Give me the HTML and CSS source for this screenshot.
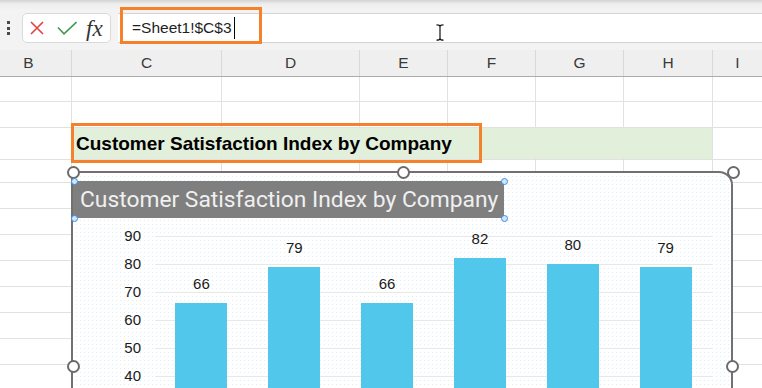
FILE: index.html
```html
<!DOCTYPE html>
<html>
<head>
    <meta charset="utf-8">
    <title>Chart title linked to cell</title>
    <link rel="stylesheet" href="styles.css">
</head>
<body>
    <div class="app">
        <!-- formula bar -->
        <div class="formula-bar">
            <div class="grip"><span></span><span></span><span></span></div>
            <div class="fx-group">
                <svg class="ic-cancel" width="14" height="14" viewBox="0 0 14 14"><path d="M1 1L13 13M13 1L1 13" stroke="#e5413f" stroke-width="1.6" fill="none"/></svg>
                <svg class="ic-enter" width="20" height="14" viewBox="0 0 20 14"><path d="M1 6.5L7 12.8L19.5 1" stroke="#3e9b4f" stroke-width="1.6" fill="none"/></svg>
                <span class="fx">fx</span>
            </div>
            <div class="formula-input">
                <span class="formula-text">=Sheet1!$C$3</span><span class="caret"></span>
            </div>
        </div>

        <!-- column headers -->
        <div class="col-heads">
            <div class="col-head first">B</div>
            <div class="col-head">C</div>
            <div class="col-head">D</div>
            <div class="col-head">E</div>
            <div class="col-head">F</div>
            <div class="col-head">G</div>
            <div class="col-head">H</div>
            <div class="col-head">I</div>
        </div>

        <!-- cells -->
        <div class="sheet">
            <div class="row r1"><div class="c"></div><div class="c"></div><div class="c"></div><div class="c"></div><div class="c"></div><div class="c"></div><div class="c"></div><div class="c"></div></div>
            <div class="row"><div class="c"></div><div class="c"></div><div class="c"></div><div class="c"></div><div class="c"></div><div class="c"></div><div class="c"></div><div class="c"></div></div>
            <div class="row title-row"><div class="c"></div><div class="c title-cell">Customer Satisfaction Index by Company</div><div class="c"></div></div>
            <div class="row"><div class="c"></div><div class="c"></div><div class="c"></div><div class="c"></div><div class="c"></div><div class="c"></div><div class="c"></div><div class="c"></div></div>
            <div class="row"><div class="c"></div><div class="c"></div><div class="c"></div><div class="c"></div><div class="c"></div><div class="c"></div><div class="c"></div><div class="c"></div></div>
            <div class="row"><div class="c"></div><div class="c"></div><div class="c"></div><div class="c"></div><div class="c"></div><div class="c"></div><div class="c"></div><div class="c"></div></div>
            <div class="row"><div class="c"></div><div class="c"></div><div class="c"></div><div class="c"></div><div class="c"></div><div class="c"></div><div class="c"></div><div class="c"></div></div>
            <div class="row"><div class="c"></div><div class="c"></div><div class="c"></div><div class="c"></div><div class="c"></div><div class="c"></div><div class="c"></div><div class="c"></div></div>
            <div class="row"><div class="c"></div><div class="c"></div><div class="c"></div><div class="c"></div><div class="c"></div><div class="c"></div><div class="c"></div><div class="c"></div></div>
            <div class="row"><div class="c"></div><div class="c"></div><div class="c"></div><div class="c"></div><div class="c"></div><div class="c"></div><div class="c"></div><div class="c"></div></div>
            <div class="row"><div class="c"></div><div class="c"></div><div class="c"></div><div class="c"></div><div class="c"></div><div class="c"></div><div class="c"></div><div class="c"></div></div>
        </div>

        <!-- floating chart -->
        <div class="chart">
            <div class="chart-title">Customer Satisfaction Index by Company</div>
            <div class="plot-row">
                <div class="y-axis">
                    <span>90</span><span>80</span><span>70</span><span>60</span><span>50</span><span>40</span>
                </div>
                <div class="plot">
                    <div class="slot"><span class="val">66</span><div class="bar" style="height: 185px"></div></div>
                    <div class="slot"><span class="val">79</span><div class="bar" style="height: 221px"></div></div>
                    <div class="slot"><span class="val">66</span><div class="bar" style="height: 185px"></div></div>
                    <div class="slot"><span class="val">82</span><div class="bar" style="height: 230px"></div></div>
                    <div class="slot"><span class="val">80</span><div class="bar" style="height: 224px"></div></div>
                    <div class="slot"><span class="val">79</span><div class="bar" style="height: 221px"></div></div>
                </div>
            </div>
        </div>

        <!-- selection handles -->
        <span class="handle h-tl"></span>
        <span class="handle h-tm"></span>
        <span class="handle h-tr"></span>
        <span class="handle h-ml"></span>
        <span class="handle h-mr"></span>
        <span class="dot-handle d1"></span>
        <span class="dot-handle d2"></span>
        <span class="dot-handle d3"></span>
        <span class="dot-handle d4"></span>

        <!-- annotation boxes -->
        <div class="mark mark-formula"></div>
        <div class="mark mark-title"></div>

        <svg class="ibeam" width="10" height="17" viewBox="0 0 10 17"><path d="M1.5 0.8C3.5 0.8 5 1.2 5 2.5C5 1.2 6.5 0.8 8.5 0.8M5 2.5V14.5M1.5 16.2C3.5 16.2 5 15.8 5 14.5C5 15.8 6.5 16.2 8.5 16.2" stroke="#111" stroke-width="1.2" fill="none"/></svg>
    </div>
</body>
</html>
```

FILE: styles.css
```css
:root {
    --cols: 72px 150px 138px 88px 88px 88px 89px 50px;
    --grid-line: #e1e1e1;
    --orange: #f5822a;
    --bar: #52c7ec;
}

* {
    box-sizing: border-box;
}

body {
    margin: 0;
    background: #fff;
    font-family: "Liberation Sans", Arial, sans-serif;
    color: #1f1f1f;
}

.app {
    position: relative;
    width: 762px;
    height: 388px;
    overflow: hidden;
    background: #fff;
}

/* formula bar */
.formula-bar {
    display: flex;
    align-items: flex-start;
    height: 50px;
    padding-top: 13px;
    background: linear-gradient(#d3d3d3, #efeeee 4px, #f4f3f3 10px);
}

.grip {
    width: 16px;
    margin-right: 6px;
    padding-top: 8px;
    display: flex;
    flex-direction: column;
    align-items: center;
    gap: 2.5px;
}

.grip span {
    width: 3px;
    height: 3px;
    background: #4a4a4a;
}

.fx-group {
    width: 89px;
    height: 30px;
    padding-left: 7px;
    display: flex;
    align-items: center;
    background: #fff;
    border: 1px solid #dadada;
    border-radius: 5px;
}

.ic-enter {
    margin-left: 13px;
}

.fx {
    margin-left: 9px;
    font-family: "Liberation Serif", "Times New Roman", serif;
    font-style: italic;
    font-size: 23px;
    color: #333;
    line-height: 1;
}

.formula-input {
    flex: 1;
    height: 30px;
    margin-left: 7px;
    padding-left: 14px;
    display: flex;
    align-items: center;
    background: #fff;
    border-top: 1px solid #d3d3d3;
    border-bottom: 1px solid #d3d3d3;
}

.formula-text {
    font-size: 15.5px;
    color: #1f1f1f;
}

.caret {
    width: 1px;
    height: 22px;
    margin-left: 2px;
    background: #000;
}

/* column headers */
.col-heads {
    display: grid;
    grid-template-columns: var(--cols);
    height: 27px;
    background: #efefef;
    border-bottom: 1px solid #ababab;
}

.col-head {
    border-right: 1px solid #d8d8d8;
    text-align: center;
    line-height: 26px;
    font-size: 15.5px;
    color: #3a3a3a;
}

.col-head.first {
    padding-right: 14px;
}

/* cells */
.row {
    display: grid;
    grid-template-columns: var(--cols);
    height: 26px;
}

.row.r1 {
    height: 25px;
}

.row.title-row {
    height: 29px;
}

.c {
    border-right: 1px solid var(--grid-line);
    border-bottom: 1px solid var(--grid-line);
}

.title-cell {
    grid-column: span 6;
    background: #e2efda;
    padding-left: 4px;
    font-size: 19px;
    font-weight: 700;
    line-height: 31px;
    color: #000;
    white-space: nowrap;
}

/* chart */
.chart {
    position: absolute;
    left: 71px;
    top: 171px;
    width: 662px;
    height: 440px;
    display: flex;
    flex-direction: column;
    border: 2px solid #717171;
    border-top-right-radius: 14px;
    /* faint dotted chart area: one dot left uncovered in every 4px cell */
    background-color: #d9f0f8;
    background-image:
        linear-gradient(to right, #fff 3px, transparent 3px),
        linear-gradient(to bottom, #fff 3px, transparent 3px);
    background-size: 4px 4px;
}

.chart-title {
    align-self: flex-start;
    width: 431px;
    height: 37px;
    margin-top: 8px;
    padding-left: 7px;
    background: #7f7f7f;
    color: #f0f0f0;
    font-family: Roboto, "Liberation Sans", sans-serif;
    font-size: 22.8px;
    line-height: 37px;
    white-space: nowrap;
}

.plot-row {
    display: flex;
    align-items: flex-start;
    margin-top: 18px;
}

.y-axis {
    width: 68px;
    margin-top: -14px;
    display: flex;
    flex-direction: column;
    text-align: right;
    font-size: 15px;
    color: #1a1a1a;
}

.y-axis span {
    height: 28px;
    line-height: 28px;
}

.plot {
    width: 557px;
    height: 252px;
    margin-left: 14px;
    display: flex;
    align-items: flex-end;
    background: repeating-linear-gradient(to bottom, #e8e8e8 0 1px, transparent 1px 28px);
}

.slot {
    flex: 1;
    display: flex;
    flex-direction: column;
    align-items: center;
}

.val {
    margin-bottom: 10px;
    font-size: 15px;
    line-height: 18px;
    color: #1a1a1a;
}

.bar {
    width: 52px;
    background: var(--bar);
}

/* handles */
.handle {
    position: absolute;
    width: 13px;
    height: 13px;
    margin: -6.5px 0 0 -6.5px;
    border: 2px solid #6b6b6b;
    border-radius: 50%;
    background: #fff;
}

.h-tl { left: 73px; top: 172px; }
.h-tm { left: 403px; top: 172px; }
.h-tr { left: 733px; top: 172px; }
.h-ml { left: 73px; top: 366px; }
.h-mr { left: 732px; top: 366px; }

.dot-handle {
    position: absolute;
    width: 7px;
    height: 7px;
    margin: -3.5px 0 0 -3.5px;
    border: 1px solid #3b8fe0;
    border-radius: 50%;
    background: #cfe6fb;
}

.d1 { left: 74px; top: 181px; }
.d2 { left: 74px; top: 218px; }
.d3 { left: 504px; top: 181px; }
.d4 { left: 504px; top: 218px; }

/* orange callouts */
.mark {
    position: absolute;
    border: 3px solid var(--orange);
}

.mark-formula {
    left: 120px;
    top: 7px;
    width: 142px;
    height: 37px;
}

.mark-title {
    left: 71px;
    top: 123px;
    width: 411px;
    height: 40px;
}

.ibeam {
    position: absolute;
    left: 435px;
    top: 24px;
}
```
